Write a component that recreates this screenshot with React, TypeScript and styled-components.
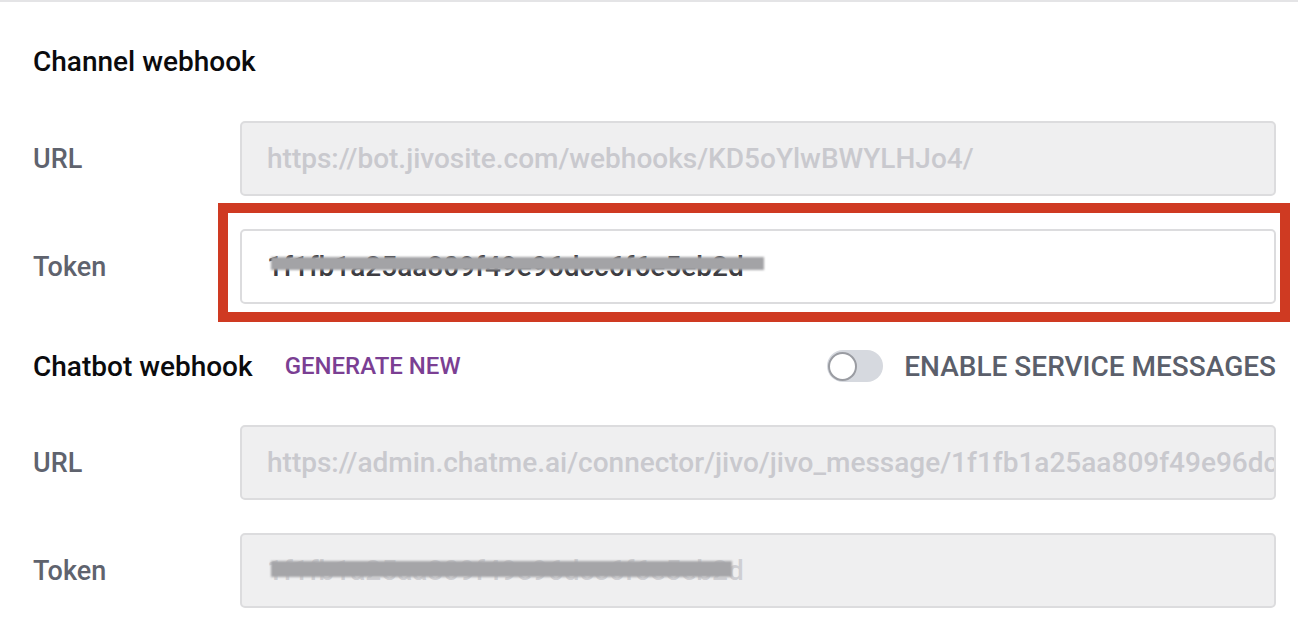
import React from 'react';
import styled, { createGlobalStyle } from 'styled-components';

const GlobalStyle = createGlobalStyle`
  html, body {
    margin: 0;
    padding: 0;
    background: #ffffff;
  }
  body {
    font-family: Roboto, "Liberation Sans", Arial, sans-serif;
  }
`;

const App = () => {
  return (
    <>
      <GlobalStyle />
      <Page>
        <SectionHeader $height={119}>
          <Title>Channel webhook</Title>
        </SectionHeader>
        <FieldRow>
          <Label>URL</Label>
          <Field disabled>https://bot.jivosite.com/webhooks/KD5oYlwBWYLHJo4/</Field>
        </FieldRow>
        <FieldRow>
          <Label>Token</Label>
          <Highlight>
            <Field>
              <Scribble>1f1fb1a25aa809f49e96dcc6f6e5eb2d</Scribble>
            </Field>
          </Highlight>
        </FieldRow>

        <SectionHeader $height={88} $bottom={30}>
          <Title>Chatbot webhook</Title>
          <LinkButton>GENERATE NEW</LinkButton>
          <Spacer />
          <Toggle>
            <Knob />
          </Toggle>
          <ToggleLabel>ENABLE SERVICE MESSAGES</ToggleLabel>
        </SectionHeader>
        <FieldRow>
          <Label>URL</Label>
          <Field disabled>
            https://admin.chatme.ai/connector/jivo/jivo_message/1f1fb1a25aa809f49e96dcc6f6e5eb2d
          </Field>
        </FieldRow>
        <FieldRow>
          <Label>Token</Label>
          <Field disabled>
            <Scribble $faded>1f1fb1a25aa809f49e96dcc6f6e5eb2d</Scribble>
          </Field>
        </FieldRow>
      </Page>
    </>
  );
};

const Page = styled.div`
  width: 1298px;
  height: 618px;
  box-sizing: border-box;
  border-top: 2px solid #e4e4e6;
  padding: 0 22px 0 33px;
  overflow: hidden;
`;

const SectionHeader = styled.div<{ $height: number; $bottom?: number }>`
  display: flex;
  align-items: center;
  box-sizing: border-box;
  height: ${(p) => p.$height}px;
  padding-bottom: ${(p) => p.$bottom ?? 0}px;
`;

const Title = styled.div`
  font-size: 28px;
  font-weight: 500;
  color: #0b0b0d;
`;

const FieldRow = styled.div`
  display: grid;
  grid-template-columns: 207px 1fr;
  align-items: center;
  margin-bottom: 33px;
`;

const Label = styled.div`
  font-size: 27px;
  font-weight: 500;
  color: #5f636e;
`;

const Field = styled.div<{ disabled?: boolean }>`
  height: 75px;
  box-sizing: border-box;
  display: flex;
  align-items: center;
  padding: 0 0 0 25px;
  border: 2px solid #dcdcde;
  border-radius: 5px;
  background: ${(p) => (p.disabled ? '#efeff0' : '#ffffff')};
  color: ${(p) => (p.disabled ? '#c9c9ce' : '#3d3d42')};
  font-size: 28px;
  font-weight: 500;
  white-space: nowrap;
  overflow: hidden;
`;

const Highlight = styled.div`
  position: relative;
  &::before {
    content: '';
    position: absolute;
    left: -22px;
    right: -14px;
    top: -26px;
    bottom: -18px;
    border: 10px solid #cf3a22;
    pointer-events: none;
  }
`;

const Scribble = styled.span<{ $faded?: boolean }>`
  position: relative;
  color: ${(p) => (p.$faded ? '#cfcfd3' : '#3d3d42')};
  &::after {
    content: '';
    position: absolute;
    left: 4px;
    right: ${(p) => (p.$faded ? '12px' : '-20px')};
    top: 20%;
    bottom: ${(p) => (p.$faded ? '30%' : '38%')};
    background: ${(p) => (p.$faded ? '#a5a5a8' : '#a3a3a6')};
    filter: blur(1.2px);
  }
`;

const LinkButton = styled.button`
  margin-left: 32px;
  padding: 0;
  border: none;
  background: none;
  font-family: inherit;
  font-size: 24px;
  font-weight: 500;
  color: #7b3f93;
  cursor: pointer;
`;

const Spacer = styled.div`
  flex: 1;
`;

const Toggle = styled.div`
  width: 56px;
  height: 32px;
  border-radius: 16px;
  background: #d6d9df;
  display: flex;
  align-items: center;
`;

const Knob = styled.div`
  width: 29px;
  height: 29px;
  border-radius: 50%;
  background: #ffffff;
  border: 2px solid #9a9ca2;
  box-sizing: border-box;
  margin-left: 1px;
`;

const ToggleLabel = styled.div`
  margin-left: 21px;
  font-size: 28px;
  font-weight: 500;
  color: #5b5f6b;
`;

export default App;
